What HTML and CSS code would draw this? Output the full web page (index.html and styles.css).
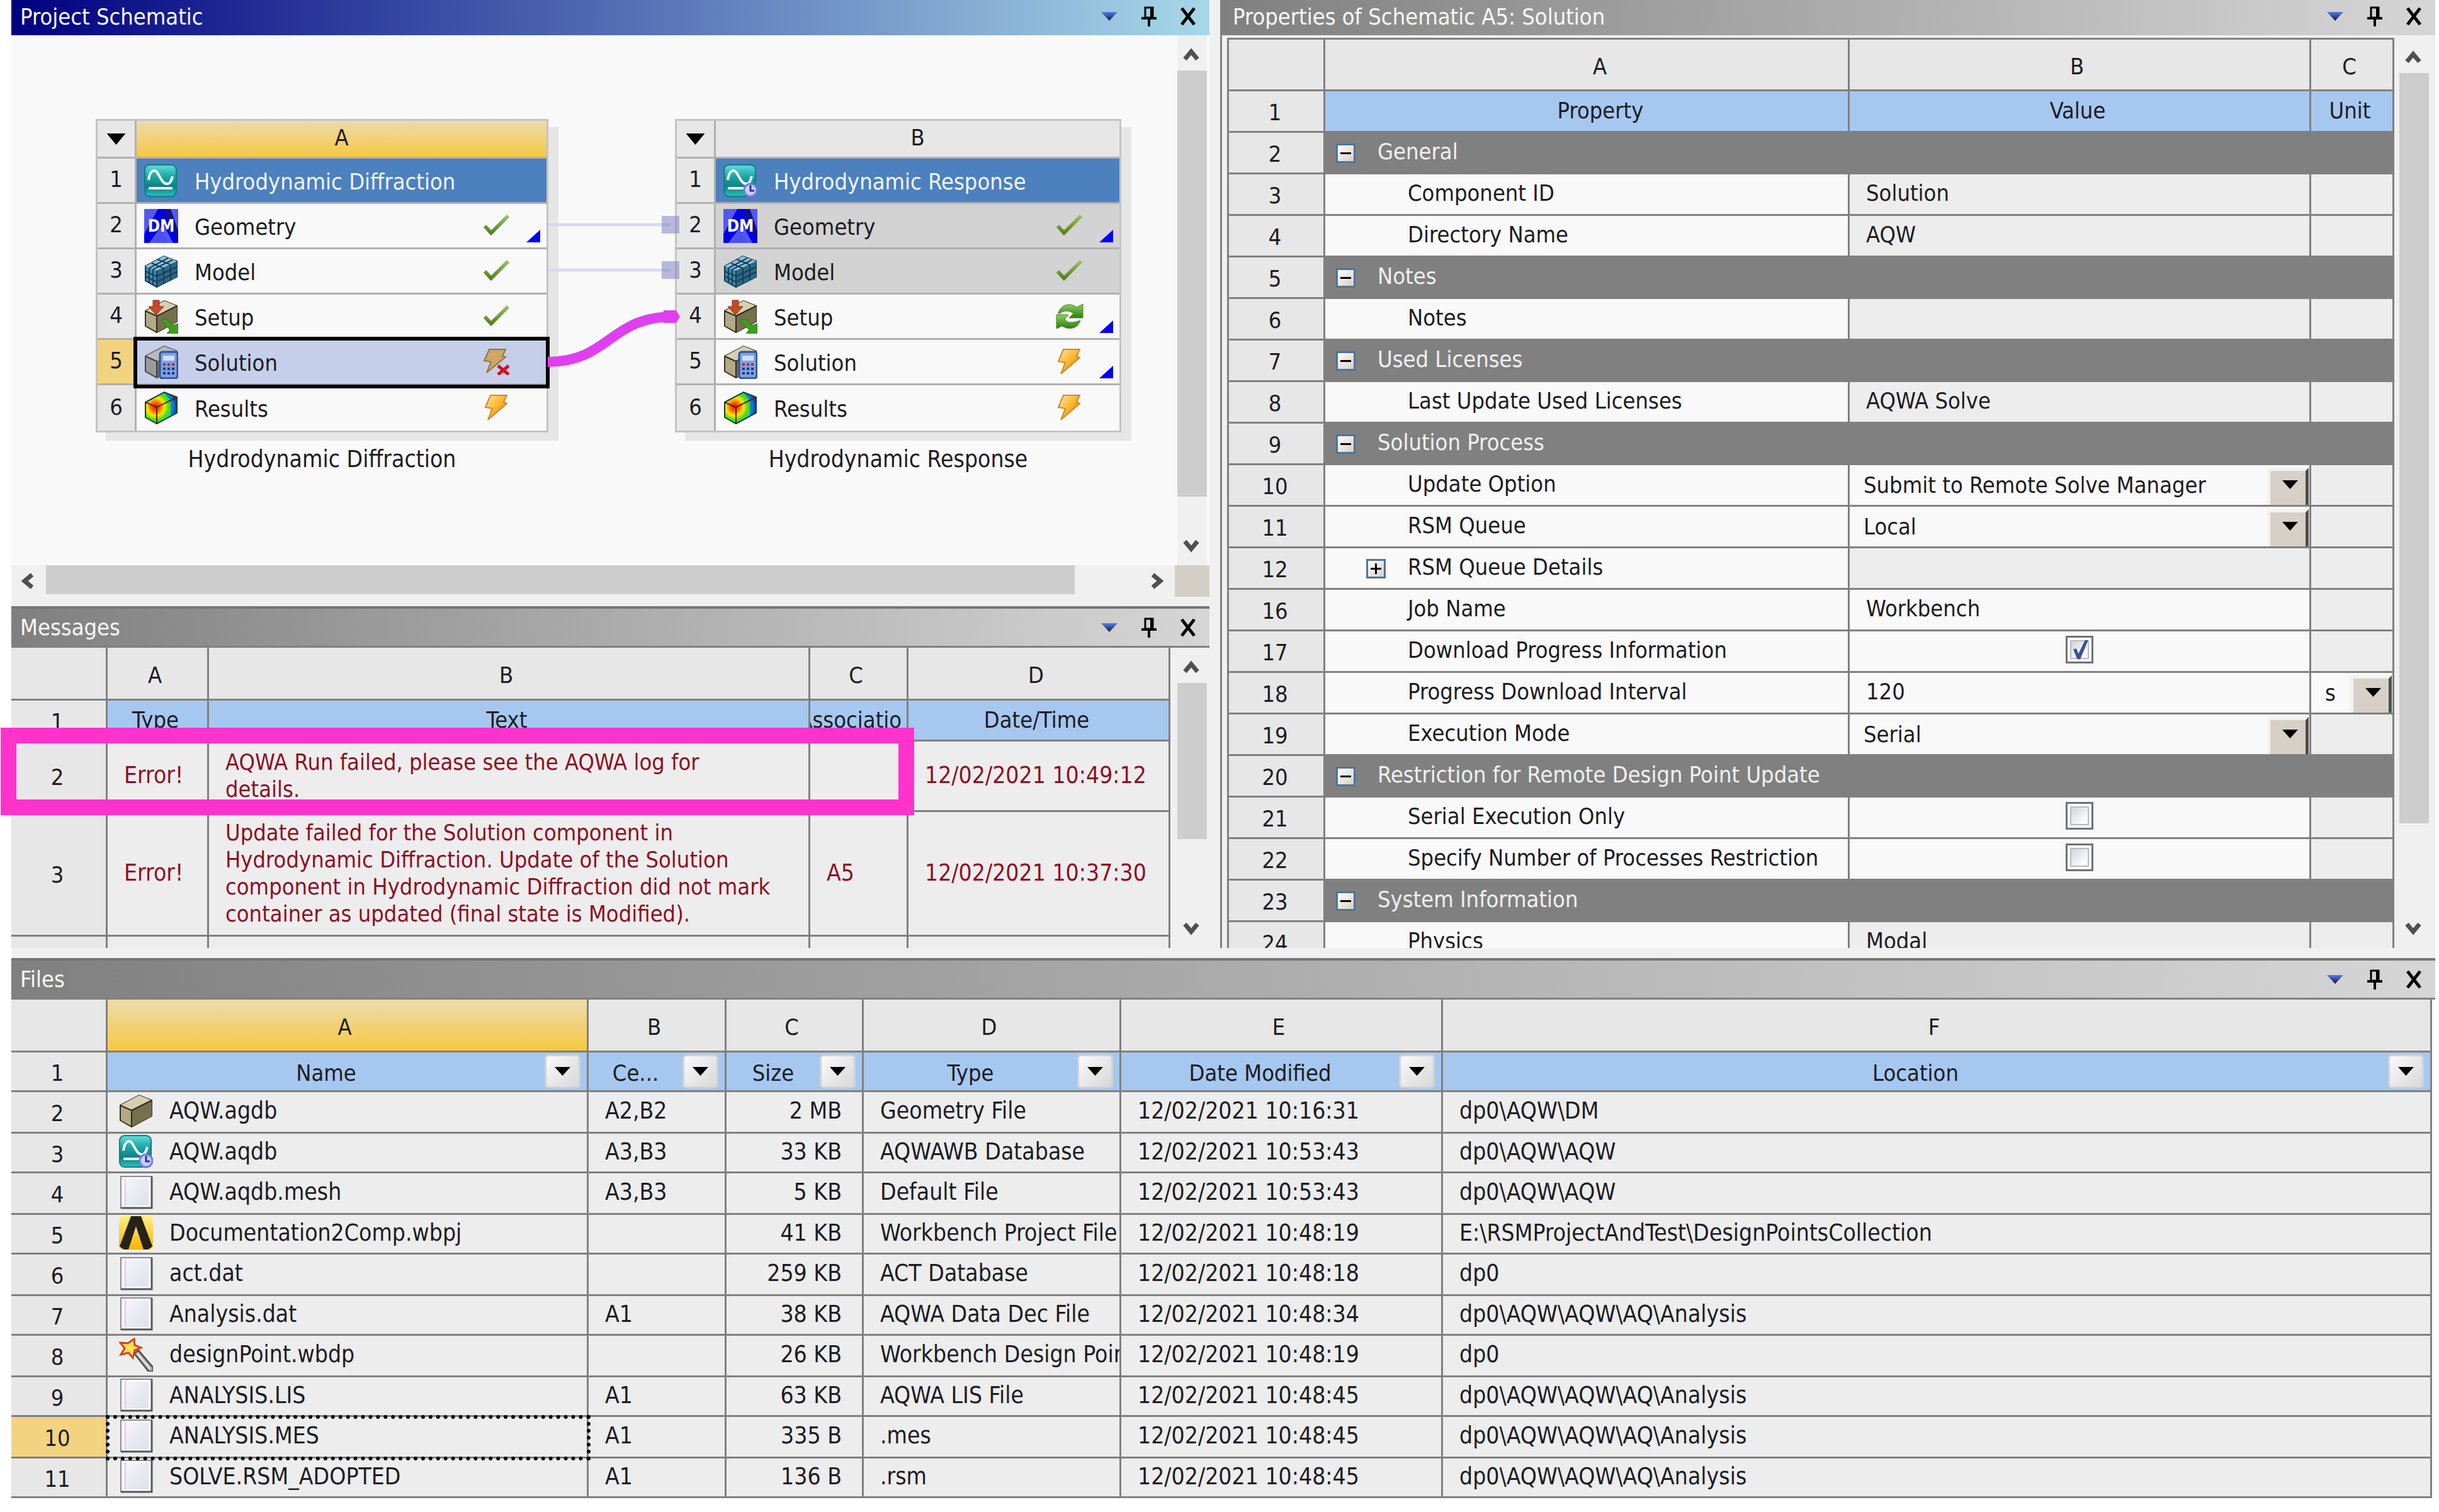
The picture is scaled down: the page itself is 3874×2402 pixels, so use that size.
FILE: index.html
```html
<!DOCTYPE html>
<html lang="en">
<head>
    <meta charset="UTF-8">
    <meta name="viewport" content="width=device-width, initial-scale=1.0">
    <title>Workbench</title>
    <link rel="stylesheet" href="styles.css">
</head>
<body>

<!-- Shared icons -->
<svg class="icon-defs" width="0" height="0" aria-hidden="true">
    <defs>
        <linearGradient id="teal" x1="0" y1="0" x2="0" y2="1">
            <stop offset="0" stop-color="#5fe0dc"/><stop offset="0.35" stop-color="#1fa9a8"/><stop offset="0.7" stop-color="#0b8082"/><stop offset="1" stop-color="#2ec4c0"/>
        </linearGradient>
        <linearGradient id="bolt" x1="0" y1="0" x2="1" y2="1">
            <stop offset="0" stop-color="#ffe9a0"/><stop offset="0.5" stop-color="#fbb52e"/><stop offset="1" stop-color="#e06a10"/>
        </linearGradient>
        <linearGradient id="leaf" x1="0" y1="0" x2="0" y2="1">
            <stop offset="0" stop-color="#8ed05a"/><stop offset="1" stop-color="#2c7d12"/>
        </linearGradient>
        <linearGradient id="tick" x1="0" y1="0" x2="0" y2="1">
            <stop offset="0" stop-color="#9cbf66"/><stop offset="1" stop-color="#56821f"/>
        </linearGradient>
        <linearGradient id="gold" x1="0" y1="0" x2="0" y2="1">
            <stop offset="0" stop-color="#fff08a"/><stop offset="1" stop-color="#f9b200"/>
        </linearGradient>
        <radialGradient id="heat" gradientUnits="userSpaceOnUse" cx="18" cy="25" r="37">
            <stop offset="0" stop-color="#e81208"/><stop offset="0.2" stop-color="#ff6a00"/><stop offset="0.38" stop-color="#ffe800"/><stop offset="0.56" stop-color="#4ede10"/><stop offset="0.76" stop-color="#10c8e0"/><stop offset="0.92" stop-color="#1030d8"/>
        </radialGradient>
        <linearGradient id="page" x1="0" y1="0" x2="1" y2="1">
            <stop offset="0" stop-color="#fbf4fd"/><stop offset="0.5" stop-color="#e9ebf2"/><stop offset="1" stop-color="#dde1ea"/>
        </linearGradient>
        <linearGradient id="arrowblue" x1="0" y1="0" x2="0" y2="1">
            <stop offset="0" stop-color="#5a7ae8"/><stop offset="1" stop-color="#101840"/>
        </linearGradient>
    </defs>
    <symbol id="i-wave" viewBox="0 0 54 54">
        <rect x="1" y="2" width="50" height="50" rx="8" fill="url(#teal)" stroke="#0d7f86" stroke-width="2"/>
        <path d="M7 26C9 10 17 7 22 16S31 33 37 32S43 25 45 20" fill="none" stroke="#f4ffff" stroke-width="4"/>
        <path d="M7 39H45" stroke="#f4ffff" stroke-width="4"/>
    </symbol>
    <symbol id="i-wavetime" viewBox="0 0 54 54">
        <use href="#i-wave" width="54" height="54"/>
        <circle cx="43" cy="42" r="10" fill="#c9d0ff" stroke="#6f7ce8" stroke-width="3"/>
        <path d="M43 34V43H49" fill="none" stroke="#2b2f9a" stroke-width="3"/>
    </symbol>
    <symbol id="i-dm" viewBox="0 0 54 54">
        <rect width="54" height="54" fill="#5457f5"/>
        <path d="M22 0H40L54 40V54H46L30 24L8 54H0V40Z" fill="#0000e6"/>
        <path d="M34 0H42L54 34V50L34 12Z" fill="#10108c"/>
        <path d="M26 30L38 54H14Z" fill="#4a50f0"/>
    </symbol>
    <symbol id="i-mesh" viewBox="0 0 54 54">
        <path d="M2 19L31 3L52 11V36L20 52L2 42Z" fill="#3f87ad" stroke="#16364a" stroke-width="2"/>
        <path d="M2 19L31 3L52 11L20 26Z" fill="#8cc4e2"/>
        <path d="M20 26L52 11V36L20 52Z" fill="#2b6788"/>
        <path d="M12 14L30 22M21 8L41 16M8 22L38 6M14 24L45 9M2 27L20 35L52 20M2 35L20 44L52 28M8 22V45M14 24V49M20 26V52M31 21V46M42 16V41" fill="none" stroke="#163d55" stroke-width="2"/>
    </symbol>
    <symbol id="i-box" viewBox="0 0 54 54">
        <path d="M2 18L32 2L52 10V35L20 52L2 42Z" fill="#b3a987" stroke="#38331f" stroke-width="2"/>
        <path d="M2 18L32 2L52 10L20 26Z" fill="#d8cfb2"/>
        <path d="M20 26L52 10V35L20 52Z" fill="#77704e"/>
        <path d="M2 18L20 26V52M20 26L52 10" fill="none" stroke="#2f2a18" stroke-width="2"/>
    </symbol>
    <symbol id="i-setup" viewBox="0 0 54 54">
        <use href="#i-box" width="54" height="54"/>
        <path d="M14 1H24V11H31L19 24L7 11H14Z" fill="#c44a28" stroke="#8c2c14" stroke-width="1"/>
        <path d="M27 33L34 30L46 41L54 38V54H36L41 48Z" fill="#3f9e1c" stroke="#2a7010" stroke-width="1"/>
    </symbol>
    <symbol id="i-calc" viewBox="0 0 54 54">
        <rect x="25" y="11" width="28" height="42" rx="4" fill="#7fa0de" stroke="#2f539c" stroke-width="3"/>
        <rect x="30" y="17" width="18" height="8" fill="#cfe0fb"/>
        <path d="M30 31H48" stroke="#b02a3c" stroke-width="4" stroke-dasharray="4 3"/>
        <path d="M30 38H48M30 45H48" stroke="#1f3a80" stroke-width="4" stroke-dasharray="4 3"/>
    </symbol>
    <symbol id="i-solution" viewBox="0 0 54 54">
        <use href="#i-box" width="54" height="54"/>
        <use href="#i-calc" width="54" height="54"/>
    </symbol>
    <symbol id="i-solution-gray" viewBox="0 0 54 54">
        <path d="M2 18L32 2L52 10V35L20 52L2 42Z" fill="#9b9b9b" stroke="#44464a" stroke-width="2"/>
        <path d="M2 18L32 2L52 10L20 26Z" fill="#b9babc"/>
        <path d="M20 26L52 10V35L20 52Z" fill="#6f7073"/>
        <path d="M2 18L20 26V52" fill="none" stroke="#3c3d40" stroke-width="2"/>
        <use href="#i-calc" width="54" height="54"/>
    </symbol>
    <symbol id="i-results" viewBox="0 0 54 54">
        <path d="M2 18L32 2L52 10V35L20 52L2 42Z" fill="url(#heat)" stroke="#17402c" stroke-width="2"/>
        <path d="M32 3L51 10V35L42 40V15Z" fill="#0a2cb8" opacity="0.45"/>
        <path d="M2 18L20 26V52M20 26L52 10" fill="none" stroke="#5a2408" stroke-width="2"/>
    </symbol>
    <symbol id="i-check" viewBox="0 0 44 42">
        <path d="M3 21L13 32L40 5" fill="none" stroke="url(#tick)" stroke-width="6"/>
    </symbol>
    <symbol id="i-bolt" viewBox="0 0 44 42">
        <path d="M12 1H38L33 12L38 14L8 40L15 22L4 20Z" fill="url(#bolt)" stroke="#d08a24" stroke-width="2"/>
    </symbol>
    <symbol id="i-boltfail" viewBox="0 0 44 42">
        <path d="M10 1H36L31 12L36 13L6 38L13 21L2 19Z" fill="#cda668" stroke="#98713c" stroke-width="2"/>
        <path d="M24 27L41 41M41 27L24 41" stroke="#d01020" stroke-width="5"/>
    </symbol>
    <symbol id="i-refresh" viewBox="0 0 44 42">
        <path d="M4 15C8 2 22 -2 33 6L43 1V23H21L28 16C20 10 12 11 5 17Z" fill="url(#leaf)" stroke="#3f8a22" stroke-width="1"/>
        <path d="M1 18H20L14 25C18 32 28 31 39 27C35 40 21 43 10 36L1 40Z" fill="url(#leaf)" stroke="#3f8a22" stroke-width="1"/>
    </symbol>
    <symbol id="i-page" viewBox="0 0 54 54">
        <path d="M3 2H52V52H3Z" fill="#fdfdfd" stroke="#8d8d92" stroke-width="2"/>
        <rect x="7" y="6" width="40" height="42" fill="url(#page)"/>
        <path d="M10 5V49" stroke="#f0c4f6" stroke-width="2"/>
        <path d="M52 2V52H3" fill="none" stroke="#55565c" stroke-width="3"/>
    </symbol>
    <symbol id="i-project" viewBox="0 0 54 54">
        <rect width="54" height="54" rx="7" fill="url(#gold)"/>
        <path d="M19 1H35L53 49L46 54H39L27 17L15 54H8L1 49Z" fill="#26211d"/>
    </symbol>
    <symbol id="i-wand" viewBox="0 0 54 54">
        <path d="M24 25L31 20L54 47V54H47Z" fill="#9a9a9a" stroke="#3c3c3c" stroke-width="2"/>
        <path d="M29 25L50 50" stroke="#e6e6e6" stroke-width="3"/>
        <path d="M24 2L25 12L35 16L25 20L22 32L15 24L3 27L9 17L2 8L14 9Z" fill="#ffdf5a" stroke="#d8421c" stroke-width="3"/>
    </symbol>
    <symbol id="i-down" viewBox="0 0 26 14">
        <path d="M0 0H26L13 14Z" fill="url(#arrowblue)"/>
    </symbol>
    <symbol id="i-pin" viewBox="0 0 24 32">
        <path d="M6 2H18V18H6Z" fill="none" stroke="#000" stroke-width="3"/>
        <path d="M16 2V18M0 19H24M12 19V32" stroke="#000" stroke-width="4"/>
    </symbol>
    <symbol id="i-close" viewBox="0 0 24 28">
        <path d="M2 1L22 27M22 1L2 27" stroke="#000" stroke-width="5"/>
    </symbol>
    <symbol id="i-chevron" viewBox="0 0 26 22">
        <path d="M3 19L13 7L23 19" fill="none" stroke="#505050" stroke-width="7"/>
    </symbol>
</svg>

<div class="workbench">
    <div class="upper">
        <div class="left-side">

            <section class="panel">
                <header class="title active">
                    <h2>Project Schematic</h2>
                    <div class="title-buttons">
                        <button type="button" aria-label="Menu"><svg width="26" height="14"><use href="#i-down"/></svg></button>
                        <button type="button" aria-label="Pin"><svg width="24" height="32"><use href="#i-pin"/></svg></button>
                        <button type="button" aria-label="Close"><svg width="24" height="28"><use href="#i-close"/></svg></button>
                    </div>
                </header>
                <div class="schematic-body">
                    <div class="canvas">
                        <div class="system system-a">
                            <table>
                                <tr class="letters"><th><button type="button" class="sys-menu" aria-label="System A menu"></button></th><th class="picked">A</th></tr>
                                <tr class="sys-name"><th>1</th><td><div class="cell"><svg class="icon"><use href="#i-wave"/></svg><span>Hydrodynamic Diffraction</span></div></td></tr>
                                <tr><th>2</th><td><div class="cell corner"><svg class="icon" viewBox="0 0 54 54"><use href="#i-dm"/><text x="27" y="36" text-anchor="middle" class="dm-text">DM</text></svg><span>Geometry</span><svg class="state"><use href="#i-check"/></svg></div></td></tr>
                                <tr><th>3</th><td><div class="cell"><svg class="icon"><use href="#i-mesh"/></svg><span>Model</span><svg class="state"><use href="#i-check"/></svg></div></td></tr>
                                <tr><th>4</th><td><div class="cell"><svg class="icon"><use href="#i-setup"/></svg><span>Setup</span><svg class="state"><use href="#i-check"/></svg></div></td></tr>
                                <tr class="selected"><th>5</th><td><div class="cell"><svg class="icon"><use href="#i-solution-gray"/></svg><span>Solution</span><svg class="state"><use href="#i-boltfail"/></svg></div></td></tr>
                                <tr><th>6</th><td><div class="cell"><svg class="icon"><use href="#i-results"/></svg><span>Results</span><svg class="state"><use href="#i-bolt"/></svg></div></td></tr>
                            </table>
                            <p>Hydrodynamic Diffraction</p>
                        </div>

                        <div class="system system-b">
                            <table>
                                <tr class="letters"><th><button type="button" class="sys-menu" aria-label="System B menu"></button></th><th>B</th></tr>
                                <tr class="sys-name"><th>1</th><td><div class="cell"><svg class="icon"><use href="#i-wavetime"/></svg><span>Hydrodynamic Response</span></div></td></tr>
                                <tr class="shared"><th>2</th><td><div class="cell corner"><svg class="icon" viewBox="0 0 54 54"><use href="#i-dm"/><text x="27" y="36" text-anchor="middle" class="dm-text">DM</text></svg><span>Geometry</span><svg class="state"><use href="#i-check"/></svg></div></td></tr>
                                <tr class="shared"><th>3</th><td><div class="cell"><svg class="icon"><use href="#i-mesh"/></svg><span>Model</span><svg class="state"><use href="#i-check"/></svg></div></td></tr>
                                <tr><th>4</th><td><div class="cell corner"><svg class="icon"><use href="#i-setup"/></svg><span>Setup</span><svg class="state"><use href="#i-refresh"/></svg></div></td></tr>
                                <tr><th>5</th><td><div class="cell corner"><svg class="icon"><use href="#i-solution"/></svg><span>Solution</span><svg class="state"><use href="#i-bolt"/></svg></div></td></tr>
                                <tr><th>6</th><td><div class="cell"><svg class="icon"><use href="#i-results"/></svg><span>Results</span><svg class="state"><use href="#i-bolt"/></svg></div></td></tr>
                            </table>
                            <p>Hydrodynamic Response</p>
                        </div>

                        <!-- Links from system A to system B -->
                        <svg class="wires" width="1850" height="840">
                            <path d="M853 301H1047M853 373H1047" stroke="#d9d9ee" stroke-width="5"/>
                            <path d="M1033 287h28v28h-28zM1033 359h28v28h-28z" fill="#8c8cc8" fill-opacity="0.6"/>
                            <path d="M852 519C950 519 950 447 1052 447" fill="none" stroke="#df3ff0" stroke-width="16"/>
                            <path d="M1036 437h20l6 10l-6 10h-20z" fill="#df3ff0"/>
                        </svg>
                    </div>
                    <div class="vscroll">
                        <button type="button" aria-label="Scroll up"><svg width="26" height="22"><use href="#i-chevron"/></svg></button>
                        <div class="thumb thumb-schematic"></div>
                        <button type="button" class="end" aria-label="Scroll down"><svg width="26" height="22"><use href="#i-chevron"/></svg></button>
                    </div>
                </div>
                <div class="hscroll">
                    <button type="button" class="to-left" aria-label="Scroll left"><svg width="26" height="22"><use href="#i-chevron"/></svg></button>
                    <div class="track"><div class="hthumb"></div></div>
                    <button type="button" class="to-right" aria-label="Scroll right"><svg width="26" height="22"><use href="#i-chevron"/></svg></button>
                    <div class="size-grip"></div>
                </div>
            </section>

            <section class="panel messages">
                <header class="title docked">
                    <h2>Messages</h2>
                    <div class="title-buttons">
                        <button type="button" aria-label="Menu"><svg width="26" height="14"><use href="#i-down"/></svg></button>
                        <button type="button" aria-label="Pin"><svg width="24" height="32"><use href="#i-pin"/></svg></button>
                        <button type="button" aria-label="Close"><svg width="24" height="28"><use href="#i-close"/></svg></button>
                    </div>
                </header>
                <div class="messages-body">
                    <div class="table-area">
                        <table class="grid messages-grid">
                            <colgroup><col class="c-num"><col class="c-type"><col><col class="c-assoc"><col class="c-time"></colgroup>
                            <tr class="letters"><th></th><th>A</th><th>B</th><th>C</th><th>D</th></tr>
                            <tr class="names"><th>1</th><th>Type</th><th>Text</th><th><div class="clipped">Association</div></th><th>Date/Time</th></tr>
                            <tr class="error"><th>2</th><td>Error!</td><td>AQWA Run failed, please see the AQWA log for details.</td><td></td><td>12/02/2021 10:49:12</td></tr>
                            <tr class="error tall"><th>3</th><td>Error!</td><td>Update failed for the Solution component in Hydrodynamic Diffraction. Update of the Solution component in Hydrodynamic Diffraction did not mark container as updated (final state is Modified).</td><td>A5</td><td>12/02/2021 10:37:30</td></tr>
                            <tr><th></th><td></td><td></td><td></td><td></td></tr>
                        </table>
                    </div>
                    <div class="vscroll">
                        <button type="button" aria-label="Scroll up"><svg width="26" height="22"><use href="#i-chevron"/></svg></button>
                        <div class="thumb thumb-messages"></div>
                        <button type="button" class="end" aria-label="Scroll down"><svg width="26" height="22"><use href="#i-chevron"/></svg></button>
                    </div>
                </div>
                <div class="highlight"></div>
            </section>
        </div>

        <section class="panel properties">
            <header class="title">
                <h2>Properties of Schematic A5: Solution</h2>
                <div class="title-buttons">
                    <button type="button" aria-label="Menu"><svg width="26" height="14"><use href="#i-down"/></svg></button>
                    <button type="button" aria-label="Pin"><svg width="24" height="32"><use href="#i-pin"/></svg></button>
                    <button type="button" aria-label="Close"><svg width="24" height="28"><use href="#i-close"/></svg></button>
                </div>
            </header>
            <div class="properties-body">
                <div class="table-area">
                    <table class="grid props-grid">
                        <colgroup><col class="c-num"><col><col class="c-value"><col class="c-unit"></colgroup>
                        <tr class="letters"><th></th><th>A</th><th>B</th><th>C</th></tr>
                        <tr class="names"><th>1</th><th>Property</th><th>Value</th><th>Unit</th></tr>
                        <tr class="group"><th>2</th><td colspan="3"><button type="button" class="expander" aria-label="Collapse"></button>General</td></tr>
                        <tr><th>3</th><td>Component ID</td><td>Solution</td><td></td></tr>
                        <tr><th>4</th><td>Directory Name</td><td>AQW</td><td></td></tr>
                        <tr class="group"><th>5</th><td colspan="3"><button type="button" class="expander" aria-label="Collapse"></button>Notes</td></tr>
                        <tr><th>6</th><td>Notes</td><td></td><td></td></tr>
                        <tr class="group"><th>7</th><td colspan="3"><button type="button" class="expander" aria-label="Collapse"></button>Used Licenses</td></tr>
                        <tr><th>8</th><td>Last Update Used Licenses</td><td>AQWA Solve</td><td></td></tr>
                        <tr class="group"><th>9</th><td colspan="3"><button type="button" class="expander" aria-label="Collapse"></button>Solution Process</td></tr>
                        <tr><th>10</th><td><label for="update_option">Update Option</label></td><td class="edit"><div class="combo"><select id="update_option"><option>Submit to Remote Solve Manager</option></select></div></td><td></td></tr>
                        <tr><th>11</th><td><label for="rsm_queue">RSM Queue</label></td><td class="edit"><div class="combo"><select id="rsm_queue"><option>Local</option></select></div></td><td></td></tr>
                        <tr><th>12</th><td class="nested"><button type="button" class="expander plus" aria-label="Expand"></button>RSM Queue Details</td><td></td><td></td></tr>
                        <tr><th>16</th><td><label for="job_name">Job Name</label></td><td class="edit"><input type="text" id="job_name" value="Workbench"></td><td></td></tr>
                        <tr><th>17</th><td><label for="download_info">Download Progress Information</label></td><td class="edit tick"><input type="checkbox" id="download_info" checked></td><td></td></tr>
                        <tr><th>18</th><td><label for="interval">Progress Download Interval</label></td><td class="edit"><input type="text" id="interval" value="120"></td><td class="edit"><div class="combo"><select aria-label="Unit"><option>s</option></select></div></td></tr>
                        <tr><th>19</th><td><label for="exec_mode">Execution Mode</label></td><td class="edit"><div class="combo"><select id="exec_mode"><option>Serial</option></select></div></td><td></td></tr>
                        <tr class="group"><th>20</th><td colspan="3"><button type="button" class="expander" aria-label="Collapse"></button>Restriction for Remote Design Point Update</td></tr>
                        <tr><th>21</th><td><label for="serial_only">Serial Execution Only</label></td><td class="edit tick"><input type="checkbox" id="serial_only"></td><td></td></tr>
                        <tr><th>22</th><td><label for="num_processes">Specify Number of Processes Restriction</label></td><td class="edit tick"><input type="checkbox" id="num_processes"></td><td></td></tr>
                        <tr class="group"><th>23</th><td colspan="3"><button type="button" class="expander" aria-label="Collapse"></button>System Information</td></tr>
                        <tr><th>24</th><td>Physics</td><td>Modal</td><td></td></tr>
                    </table>
                </div>
                <div class="vscroll">
                    <button type="button" aria-label="Scroll up"><svg width="26" height="22"><use href="#i-chevron"/></svg></button>
                    <div class="thumb thumb-properties"></div>
                    <button type="button" class="end" aria-label="Scroll down"><svg width="26" height="22"><use href="#i-chevron"/></svg></button>
                </div>
            </div>
        </section>
    </div>

    <section class="panel files">
        <header class="title docked">
            <h2>Files</h2>
            <div class="title-buttons">
                <button type="button" aria-label="Menu"><svg width="26" height="14"><use href="#i-down"/></svg></button>
                <button type="button" aria-label="Pin"><svg width="24" height="32"><use href="#i-pin"/></svg></button>
                <button type="button" aria-label="Close"><svg width="24" height="28"><use href="#i-close"/></svg></button>
            </div>
        </header>
        <div class="files-body">
            <table class="grid files-grid">
                <colgroup><col class="c-num"><col class="c-name"><col class="c-cell"><col class="c-size"><col class="c-filetype"><col class="c-modified"><col></colgroup>
                <tr class="letters"><th></th><th class="picked">A</th><th>B</th><th>C</th><th>D</th><th>E</th><th>F</th></tr>
                <tr class="names">
                    <th>1</th>
                    <th><div class="filter"><span>Name</span><button type="button" aria-label="Filter name"></button></div></th>
                    <th><div class="filter"><span>Ce...</span><button type="button" aria-label="Filter cell ID"></button></div></th>
                    <th><div class="filter"><span>Size</span><button type="button" aria-label="Filter size"></button></div></th>
                    <th><div class="filter"><span>Type</span><button type="button" aria-label="Filter type"></button></div></th>
                    <th><div class="filter"><span>Date Modified</span><button type="button" aria-label="Filter date"></button></div></th>
                    <th><div class="filter"><span>Location</span><button type="button" aria-label="Filter location"></button></div></th>
                </tr>
                <tr><th>2</th><td><div class="file"><svg class="icon"><use href="#i-box"/></svg>AQW.agdb</div></td><td>A2,B2</td><td>2 MB</td><td>Geometry File</td><td>12/02/2021 10:16:31</td><td>dp0\AQW\DM</td></tr>
                <tr><th>3</th><td><div class="file"><svg class="icon"><use href="#i-wavetime"/></svg>AQW.aqdb</div></td><td>A3,B3</td><td>33 KB</td><td>AQWAWB Database</td><td>12/02/2021 10:53:43</td><td>dp0\AQW\AQW</td></tr>
                <tr><th>4</th><td><div class="file"><svg class="icon"><use href="#i-page"/></svg>AQW.aqdb.mesh</div></td><td>A3,B3</td><td>5 KB</td><td>Default File</td><td>12/02/2021 10:53:43</td><td>dp0\AQW\AQW</td></tr>
                <tr><th>5</th><td><div class="file"><svg class="icon"><use href="#i-project"/></svg>Documentation2Comp.wbpj</div></td><td></td><td>41 KB</td><td>Workbench Project File</td><td>12/02/2021 10:48:19</td><td>E:\RSMProjectAndTest\DesignPointsCollection</td></tr>
                <tr><th>6</th><td><div class="file"><svg class="icon"><use href="#i-page"/></svg>act.dat</div></td><td></td><td>259 KB</td><td>ACT Database</td><td>12/02/2021 10:48:18</td><td>dp0</td></tr>
                <tr><th>7</th><td><div class="file"><svg class="icon"><use href="#i-page"/></svg>Analysis.dat</div></td><td>A1</td><td>38 KB</td><td>AQWA Data Dec File</td><td>12/02/2021 10:48:34</td><td>dp0\AQW\AQW\AQ\Analysis</td></tr>
                <tr><th>8</th><td><div class="file"><svg class="icon"><use href="#i-wand"/></svg>designPoint.wbdp</div></td><td></td><td>26 KB</td><td>Workbench Design Point</td><td>12/02/2021 10:48:19</td><td>dp0</td></tr>
                <tr><th>9</th><td><div class="file"><svg class="icon"><use href="#i-page"/></svg>ANALYSIS.LIS</div></td><td>A1</td><td>63 KB</td><td>AQWA LIS File</td><td>12/02/2021 10:48:45</td><td>dp0\AQW\AQW\AQ\Analysis</td></tr>
                <tr class="current"><th>10</th><td><div class="file"><svg class="icon"><use href="#i-page"/></svg>ANALYSIS.MES</div></td><td>A1</td><td>335 B</td><td>.mes</td><td>12/02/2021 10:48:45</td><td>dp0\AQW\AQW\AQ\Analysis</td></tr>
                <tr><th>11</th><td><div class="file"><svg class="icon"><use href="#i-page"/></svg>SOLVE.RSM_ADOPTED</div></td><td>A1</td><td>136 B</td><td>.rsm</td><td>12/02/2021 10:48:45</td><td>dp0\AQW\AQW\AQ\Analysis</td></tr>
            </table>
        </div>
    </section>
</div>

</body>
</html>
```

FILE: styles.css
```css
* {
    box-sizing: border-box;
}
body {
    margin: 0;
    background-color: #fff;
    font-family: "DejaVu Sans Condensed", "Open Sans", sans-serif;
    font-size: 36px;
    line-height: 43px;
    color: #1c1c24;
}
button, input, select {
    font: inherit;
    color: inherit;
    margin: 0;
    padding: 0;
    border: none;
    background: none;
}
.icon-defs {
    position: absolute;
}
.dm-text {
    font-family: "DejaVu Sans Condensed", sans-serif;
    font-size: 26px;
    font-weight: bold;
    fill: #fff;
}
.workbench {
    margin-left: 18px;
    margin-right: 6px;
}
.upper {
    display: grid;
    grid-template-columns: minmax(0, 1903fr) minmax(0, 1930fr);
    gap: 17px;
    padding-bottom: 16px;
    background-color: #f0f0f0;
}
.left-side {
    display: flex;
    flex-direction: column;
    gap: 15px;
}

/* Title bars */
.title {
    display: flex;
    align-items: center;
    justify-content: space-between;
    height: 56px;
    padding: 0 22px 4px 14px;
    background: linear-gradient(to right, #808080, #d6d6d6);
    color: #f8f8f8;
}
.title.active {
    background: linear-gradient(to right, #000080, #a6d8e8);
}
.title.docked {
    height: 66px;
    padding-bottom: 0;
    border-top: 4px solid #757575;
    border-bottom: 3px solid #808080;
}
.title h2 {
    margin: 0;
    font-size: 36px;
    font-weight: normal;
}
.title-buttons {
    display: flex;
    align-items: center;
    gap: 38px;
}
.title-buttons button {
    display: flex;
}

/* Scroll bars */
.vscroll {
    display: flex;
    flex-direction: column;
    align-items: center;
    width: 47px;
    background-color: #f0f0f0;
}
.vscroll button {
    display: flex;
    align-items: center;
    height: 56px;
    padding-top: 4px;
    padding-right: 4px;
}
.vscroll .end {
    margin-top: auto;
    padding-left: 4px;
    padding-right: 0;
    transform: rotate(180deg);
}
.thumb {
    width: 100%;
    background-color: #cdcdcd;
}
.thumb-schematic {
    height: 677px;
}
.thumb-messages {
    height: 248px;
}
.thumb-properties {
    height: 1192px;
}
.hscroll {
    display: flex;
    height: 50px;
    background-color: #f0f0f0;
}
.hscroll button {
    width: 55px;
    height: 46px;
}
.to-left {
    padding-right: 6px;
}
.to-left svg {
    transform: rotate(-90deg);
}
.to-right svg {
    transform: rotate(90deg);
}
.track {
    flex: 1;
    height: 46px;
}
.hthumb {
    width: 94%;
    height: 100%;
    background-color: #cdcdcd;
}
.size-grip {
    width: 55px;
    background-color: #d4cfc6;
}

/* Project schematic */
.schematic-body {
    display: flex;
    height: 842px;
    padding-right: 4px;
    background-color: #f9f9f9;
}
.canvas {
    position: relative;
    flex: 1;
}
.wires {
    position: absolute;
    left: 0;
    top: 0;
    pointer-events: none;
}
.system {
    position: absolute;
    top: 133px;
}
.system-a {
    left: 134px;
    width: 719px;
}
.system-b {
    left: 1054px;
    width: 709px;
}
.system table {
    width: 100%;
    table-layout: fixed;
    border: 3px solid #c4c4c4;
    border-spacing: 0;
    background-color: #f9f9f9;
    box-shadow: 16px 13px 0 #e6e6e6;
}
.system th {
    width: 62px;
    height: 72px;
    padding: 0 0 4px;
    border-right: 3px solid #b0b0b0;
    border-bottom: 3px solid #b0b0b0;
    background-color: #e7e7e7;
    font-weight: normal;
}
.system td {
    height: 72px;
    padding: 0;
    border-bottom: 3px solid #b0b0b0;
}
.system .letters th {
    height: 60px;
}
.system .letters th:last-child {
    width: auto;
    border-right: none;
}
.system tr:last-child th, .system tr:last-child td {
    border-bottom: none;
}
.system p {
    margin: 21px 0 0;
    font-size: 37px;
    text-align: center;
}
.sys-menu {
    width: 30px;
    height: 18px;
    background-color: #000;
    clip-path: polygon(0 0, 100% 0, 50% 100%);
    vertical-align: middle;
}
.picked, .letters th.picked {
    background: linear-gradient(#ecdcae, #f8c840);
}
.sys-name td {
    background-color: #4c80be;
    color: #f2f6fc;
}
.shared td {
    background-color: #d3d3d3;
}
.system .selected th {
    background-color: #f2d380;
}
.selected td {
    background-color: #c6cfea;
    outline: 6px solid #000;
    outline-offset: -1px;
}
.cell {
    display: flex;
    align-items: center;
    position: relative;
    height: 69px;
    padding: 0 57px 0 12px;
}
.cell span {
    padding-top: 3px;
}
.cell .icon {
    margin-right: 26px;
}
.icon {
    flex: none;
    width: 54px;
    height: 54px;
}
.state {
    width: 44px;
    height: 42px;
    margin-left: auto;
}
.corner::after {
    content: "";
    position: absolute;
    right: 10px;
    bottom: 8px;
    width: 22px;
    height: 20px;
    background-color: #0000ff;
    clip-path: polygon(100% 0, 100% 100%, 0 100%);
}

/* Grids */
.grid {
    width: 100%;
    table-layout: fixed;
    border-spacing: 0;
    background-color: #ededed;
}
.grid th, .grid td {
    height: 66px;
    padding: 0 26px 4px;
    border-right: 3px solid #808080;
    border-bottom: 3px solid #808080;
    text-align: left;
    font-weight: normal;
    white-space: nowrap;
    overflow: hidden;
}
.grid th {
    padding: 0 6px 2px 0;
    background-color: #e7e7e7;
    text-align: center;
}
.grid th:first-child {
    padding: 4px 4px 0 0;
}
.grid .letters th {
    height: 82px;
    padding: 6px 8px 0 0;
}
.grid .letters th.picked {
    background: linear-gradient(#ecdcae, #f8c840);
}
.grid .names th + th {
    background-color: #a6c8f0;
}
.c-num {
    width: 153px;
}

/* Messages */
.messages {
    position: relative;
}
.messages-body {
    display: flex;
    gap: 11px;
    height: 477px;
    padding-right: 4px;
    overflow: hidden;
}
.table-area {
    flex: 1;
    min-width: 0;
}
.c-type {
    width: 161px;
}
.c-assoc {
    width: 156px;
}
.c-time {
    width: 416px;
}
.messages-grid .letters th {
    height: 84px;
}
.messages-grid .names th {
    height: 65px;
}
.clipped {
    display: flex;
    justify-content: center;
    overflow: hidden;
}
.messages-grid .error td {
    height: 112px;
    padding-bottom: 2px;
    font-size: 37px;
    color: #8c1024;
}
.messages-grid .error td:nth-child(3) {
    padding-right: 52px;
    font-size: 36px;
    white-space: normal;
}
.messages-grid .error.tall td {
    height: 198px;
}
.highlight {
    position: absolute;
    left: -17px;
    top: 193px;
    width: 1451px;
    height: 139px;
    border: 25px solid #ff33cc;
}

/* Properties */
.properties {
    border-left: 3px solid #808080;
}
.properties .title {
    padding-left: 17px;
}
.properties-body {
    display: flex;
    gap: 8px;
    height: 1450px;
    padding: 4px 10px 0 8px;
    overflow: hidden;
}
.props-grid {
    border-left: 3px solid #808080;
    border-top: 3px solid #808080;
}
.c-value {
    width: 733px;
}
.c-unit {
    width: 132px;
}
.props-grid .letters th:nth-child(2), .props-grid .names th:nth-child(2) {
    padding-left: 50px;
}
.props-grid td:nth-child(2) {
    padding-left: 131px;
    background-color: #f9f9f9;
}
.props-grid td.edit {
    padding: 0;
    background-color: #f9f9f9;
}
.props-grid .group td {
    padding-left: 17px;
    background-color: #808080;
    color: #f0f0f0;
}
.props-grid td.nested {
    padding-left: 65px;
}
.expander {
    position: relative;
    width: 31px;
    height: 31px;
    margin-right: 35px;
    border: 3px solid #4f7496;
    background: linear-gradient(135deg, #fff, #d6cfc4);
    vertical-align: middle;
}
.expander::before, .expander.plus::after {
    content: "";
    position: absolute;
    left: 4px;
    top: 11px;
    width: 17px;
    height: 3px;
    background-color: #000;
}
.expander.plus::after {
    transform: rotate(90deg);
}
.props-grid input[type="text"] {
    display: block;
    width: 100%;
    height: 63px;
    padding: 0 26px 4px;
}
.combo {
    position: relative;
    height: 63px;
}
.combo select {
    width: 100%;
    height: 63px;
    padding-left: 22px;
    appearance: none;
}
.combo::before {
    content: "";
    position: absolute;
    right: 1px;
    top: 4px;
    width: 56px;
    height: 54px;
    border: 5px solid;
    border-color: #f4f2ee #505050 #505050 #f4f2ee;
    background-color: #d6d0c8;
    pointer-events: none;
}
.combo::after {
    content: "";
    position: absolute;
    right: 18px;
    top: 24px;
    width: 25px;
    height: 14px;
    background-color: #000;
    clip-path: polygon(0 0, 100% 0, 50% 100%);
    pointer-events: none;
}
.props-grid .tick {
    text-align: center;
}
.tick input {
    position: relative;
    display: block;
    width: 44px;
    height: 44px;
    margin: 0 auto 6px;
    border: 3px solid #6e7275;
    outline: 2px solid #b8bcc0;
    outline-offset: -9px;
    background: linear-gradient(135deg, #c4cbd4, #fbfbfb 70%);
    box-shadow: inset 0 0 0 4px #fafafa;
    appearance: none;
}
.tick input:checked::before {
    content: "";
    position: absolute;
    left: 7px;
    top: 4px;
    width: 26px;
    height: 31px;
    background-color: #3a5296;
    clip-path: polygon(8% 48%, 26% 44%, 40% 70%, 80% 2%, 100% 0, 50% 100%, 32% 98%);
}

/* Files */
.files-body {
    padding-right: 5px;
}
.c-name {
    width: 764px;
}
.c-cell {
    width: 219px;
}
.c-size {
    width: 218px;
}
.c-filetype {
    width: 409px;
}
.c-modified {
    width: 511px;
}
.files-grid td {
    font-size: 37px;
}
.files-grid .letters th {
    height: 84px;
}
.files-grid tr:nth-child(even) th, .files-grid tr:nth-child(even) td {
    height: 63px;
}
.files-grid .names th + th {
    padding: 0;
}
.files-grid td:nth-child(2) {
    padding-left: 18px;
}
.files-grid td:nth-child(4) {
    padding-right: 32px;
    text-align: right;
}
.files-grid td:nth-child(5) {
    padding-right: 0;
}
.file {
    display: flex;
    align-items: center;
    gap: 26px;
    height: 54px;
}
.filter {
    display: flex;
    align-items: center;
    padding-right: 10px;
}
.filter span {
    flex: 1;
    padding-top: 4px;
}
.filter button {
    position: relative;
    width: 57px;
    height: 54px;
    border: 3px solid #cfd2d6;
    border-radius: 6px;
    background: linear-gradient(135deg, #fafafa, #d8d8d8);
}
.filter button::after {
    content: "";
    position: absolute;
    left: 13px;
    top: 17px;
    width: 25px;
    height: 14px;
    background-color: #000;
    clip-path: polygon(0 0, 100% 0, 50% 100%);
}
.grid .current th {
    background-color: #f2d380;
}
.current td:nth-child(2) {
    outline: 6px dotted #000;
    outline-offset: -3px;
}
```
